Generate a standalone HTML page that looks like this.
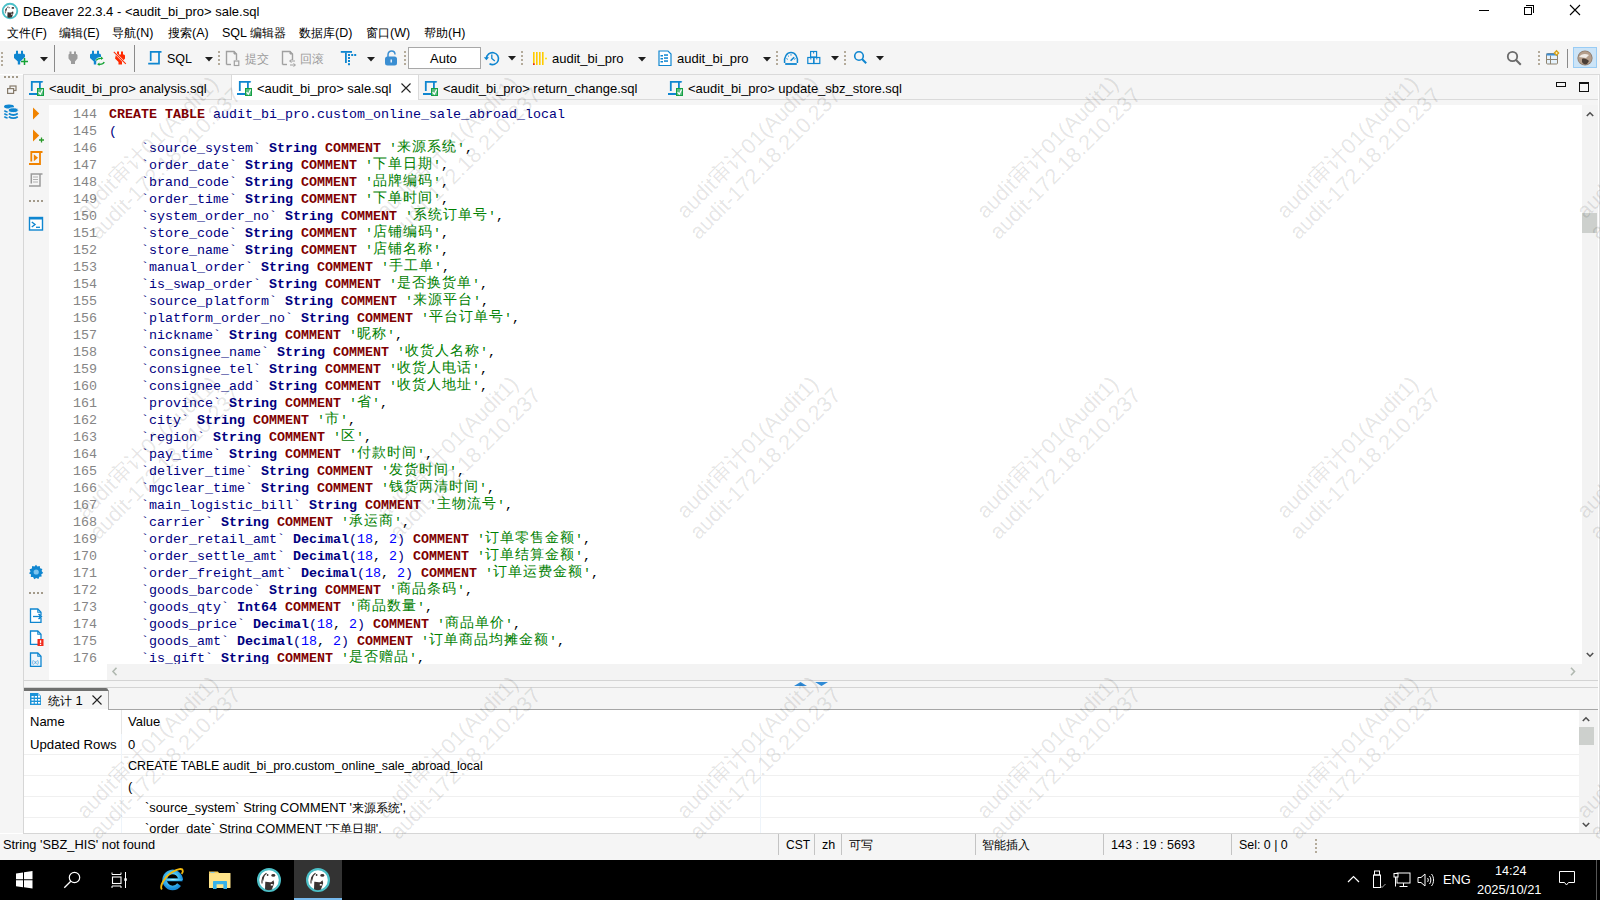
<!DOCTYPE html>
<html><head><meta charset="utf-8"><title>DBeaver</title>
<style>
*{margin:0;padding:0;box-sizing:border-box}
html,body{width:1600px;height:900px;overflow:hidden;background:#fff}
body{position:relative;font-family:"Liberation Sans",sans-serif;font-size:13px;color:#000}
.a{position:absolute}
svg.a{overflow:visible}
.ui{font-family:"Liberation Sans",sans-serif;white-space:nowrap}
.c{font-size:12px}
#code{position:absolute;left:109px;top:106px;font-family:"Liberation Mono",monospace;font-size:13.333px;line-height:17px;white-space:pre;color:#000}
#code div{height:17px}
#lnum{position:absolute;left:49px;top:106px;width:48px;font-family:"Liberation Mono",monospace;font-size:13.333px;line-height:17px;text-align:right;color:#858585;white-space:pre}
.k{color:#800000;font-weight:bold}
.t{color:#000080;font-weight:bold}
.i{color:#000080}
.n{color:#0000ff}
.s{color:#008000}
.cj{font-size:14px;letter-spacing:1px;position:relative;top:-1px}
#wm{position:absolute;left:0;top:0;width:1600px;height:900px;pointer-events:none;overflow:hidden}
.wm{position:absolute;color:rgba(0,0,0,0.11);font-size:21.5px;white-space:nowrap;transform:rotate(-45deg);transform-origin:0 100%;line-height:24px;font-family:"Liberation Sans",sans-serif}
</style></head><body>

<svg class="a" style="left:2px;top:2.75px" width="16" height="16" viewBox="0 0 24 24"><circle cx="12" cy="12" r="10.9" fill="#fff" stroke="#4cc0c8" stroke-width="2.8"/><path d="M5 15.5 C4.8 12 5.5 9 7.5 7 L9.5 5.2" stroke="#3a3230" stroke-width="1.1" fill="none"/><path d="M5.2 10 C5.5 8.8 6.5 8 7.5 7.8 L6.2 13Z" fill="#3a3230"/><circle cx="10.6" cy="7" r="0.9" fill="#3a3230"/><ellipse cx="16.3" cy="7.4" rx="2" ry="1.3" fill="#3a3230"/><path d="M8.3 13.8 C10 13.5 12 14.8 14.2 14.2 L16.5 12.3 L17.2 15 C16.5 17.5 15.5 19.5 15 21.5 C12.8 22.5 10.3 22.3 8 21.3 Z" fill="#3a3230"/><rect x="13.8" y="16" width="2" height="1.6" fill="#fff"/></svg>
<div class="a ui" style="left:23px;top:4.00px;font-size:13px;line-height:15px;color:#000;">DBeaver 22.3.4 - &lt;audit_bi_pro&gt; sale.sql</div>
<div class="a" style="left:1479px;top:10px;width:10px;height:1px;background:#000"></div>
<div class="a" style="left:1524px;top:7px;width:8px;height:8px;border:1px solid #000;background:#fff"></div>
<div class="a" style="left:1526px;top:5px;width:8px;height:2px;border-top:1px solid #000;border-right:1px solid #000"></div>
<div class="a" style="left:1533px;top:5px;width:1px;height:8px;background:#000"></div>
<svg class="a" style="left:1569px;top:4px" width="12" height="12" viewBox="0 0 12 12"><path d="M1 1L11 11M11 1L1 11" stroke="#000" stroke-width="1.1"/></svg>
<div class="a ui" style="left:7px;top:25.67px;font-size:12.5px;line-height:14px;color:#000;"><span class="c">文件</span>(F)</div>
<div class="a ui" style="left:59px;top:25.67px;font-size:12.5px;line-height:14px;color:#000;"><span class="c">编辑</span>(E)</div>
<div class="a ui" style="left:112px;top:25.67px;font-size:12.5px;line-height:14px;color:#000;"><span class="c">导航</span>(N)</div>
<div class="a ui" style="left:168px;top:25.67px;font-size:12.5px;line-height:14px;color:#000;"><span class="c">搜索</span>(A)</div>
<div class="a ui" style="left:299px;top:25.67px;font-size:12.5px;line-height:14px;color:#000;"><span class="c">数据库</span>(D)</div>
<div class="a ui" style="left:366px;top:25.67px;font-size:12.5px;line-height:14px;color:#000;"><span class="c">窗口</span>(W)</div>
<div class="a ui" style="left:424px;top:25.67px;font-size:12.5px;line-height:14px;color:#000;"><span class="c">帮助</span>(H)</div>
<div class="a ui" style="left:222px;top:25.67px;font-size:12.5px;line-height:14px;color:#000;">SQL <span class="c">编辑器</span></div>
<div class="a" style="left:0;top:41px;width:1600px;height:33px;background:#f5f5f5"></div>
<div class="a" style="left:23px;top:74px;width:1577px;height:1px;background:#dadada"></div>
<div class="a" style="left:1px;top:52px;width:2px;height:2px;background:#b4ab9b"></div><div class="a" style="left:1px;top:56px;width:2px;height:2px;background:#b4ab9b"></div><div class="a" style="left:1px;top:60px;width:2px;height:2px;background:#b4ab9b"></div><div class="a" style="left:1px;top:64px;width:2px;height:2px;background:#b4ab9b"></div>
<svg class="a" style="left:10px;top:48px" width="22" height="20" viewBox="0 0 22 20"><path d="M4 6.5 L5 5.8 H6 V2.8 H8 V5.8 H11 V2.8 H13 V5.8 H14 L15 6.8 V9 L10.2 13.6 V16.6 H7.8 V13.6 L4 10Z" fill="#0f86d0"/><path d="M11 13.5H18M14.5 10V17" stroke="#15a335" stroke-width="1.5"/></svg>
<svg class="a" style="left:40px;top:57px" width="8" height="5" viewBox="0 0 8 5"><path d="M0 0H8L4 4.5Z" fill="#1e1e1e"/></svg>
<div class="a" style="left:54px;top:45px;width:1px;height:27px;background:#8a8a8a"></div>
<svg class="a" style="left:64px;top:48px" width="18" height="20" viewBox="0 0 18 20"><path d="M4.5 6.8 L5 6 H5.5 V3.5 H7.5 V6 H10 V3.5 H12 V6 H12.5 L13.5 7 V10.5 L11 13.5 V16 H7 V13.5 L4.5 10.5Z" fill="#9c9c9c"/></svg>
<svg class="a" style="left:86px;top:48px" width="22" height="20" viewBox="0 0 22 20"><path d="M4 6.5 L5 5.8 H6 V2.8 H8 V5.8 H11 V2.8 H13 V5.8 H14 L15 6.8 V9 L10.2 13.6 V16.6 H7.8 V13.6 L4 10Z" fill="#0f86d0"/><path d="M10.5 13 C11.5 11 13 10.3 16 10.5" stroke="#fff" stroke-width="3" fill="none"/><path d="M10.2 12.5 C11 10.8 12.5 10.2 15.5 10.3" stroke="#15a335" stroke-width="1.3" fill="none"/><path d="M15 8.6 L17.3 10.3 L15 12Z" fill="#15a335"/><path d="M18.2 14 C17.5 15.8 16 16.5 13 16.3" stroke="#15a335" stroke-width="1.3" fill="none"/><path d="M13.5 14.6 L11.2 16.3 L13.5 18Z" fill="#15a335"/></svg>
<svg class="a" style="left:110px;top:48px" width="20" height="20" viewBox="0 0 20 20"><path d="M6 6.5 H7 V3.5 H9 V6.5 H11 V3.5 H13 V6.5 H14 L15 7.5 V10.5 L12 14 V16.5 H8.5 V14 L5 10.5Z" fill="#ff2a00"/><path d="M3.5 3.5 L16.5 16.5" stroke="#f5f5f5" stroke-width="2.2"/><path d="M3.8 3.8 L15.8 15.8" stroke="#ff2a00" stroke-width="1.1"/></svg>
<div class="a" style="left:134px;top:45px;width:1px;height:27px;background:#8a8a8a"></div>
<svg class="a" style="left:144px;top:48px" width="22" height="20" viewBox="0 0 22 20"><path d="M6.7 13 V3.8 H17.5 M15 3.8 V15.6 H4.2" stroke="#0f86d0" stroke-width="1.7" fill="none"/></svg>
<div class="a ui" style="left:167px;top:51.67px;font-size:12.5px;line-height:14px;color:#000;">SQL</div>
<svg class="a" style="left:205px;top:57px" width="8" height="5" viewBox="0 0 8 5"><path d="M0 0H8L4 4.5Z" fill="#1e1e1e"/></svg>
<div class="a" style="left:218px;top:51px;width:2px;height:2px;background:#b4ab9b"></div><div class="a" style="left:218px;top:55px;width:2px;height:2px;background:#b4ab9b"></div><div class="a" style="left:218px;top:59px;width:2px;height:2px;background:#b4ab9b"></div><div class="a" style="left:218px;top:63px;width:2px;height:2px;background:#b4ab9b"></div>
<svg class="a" style="left:225px;top:50px" width="16" height="17" viewBox="0 0 16 17"><path d="M1.5 14.5 V1.5 H9 L11.5 4 V10" stroke="#a0a0a0" stroke-width="1.4" fill="none"/><path d="M9 1.5 V4 H11.5" fill="#a0a0a0" stroke="#a0a0a0" stroke-width="1"/><path d="M1.5 14.5 H6" stroke="#a0a0a0" stroke-width="1.4"/><rect x="9.3" y="11" width="4.5" height="4.5" fill="none" stroke="#a0a0a0" stroke-width="1.2"/></svg>
<div class="a ui" style="left:245px;top:51.84px;font-size:12px;line-height:14px;color:#9c9c9c;"><span class="c" style="font-size:11.5px">提交</span></div>
<svg class="a" style="left:281px;top:50px" width="16" height="17" viewBox="0 0 16 17"><path d="M1.5 14.5 V1.5 H9 L11.5 4 V10" stroke="#a0a0a0" stroke-width="1.4" fill="none"/><path d="M9 1.5 V4 H11.5" fill="#a0a0a0" stroke="#a0a0a0" stroke-width="1"/><path d="M1.5 14.5 H6" stroke="#a0a0a0" stroke-width="1.4"/><path d="M9 11H14M9 15H14" stroke="#a0a0a0" stroke-width="1.1"/><path d="M10.5 9.5L8.5 11L10.5 12.5M12.5 13.5L14.5 15L12.5 16.5" stroke="#a0a0a0" stroke-width="1" fill="none"/></svg>
<div class="a ui" style="left:300px;top:51.84px;font-size:12px;line-height:14px;color:#9c9c9c;"><span class="c" style="font-size:11.5px">回滚</span></div>
<svg class="a" style="left:340px;top:50px" width="18" height="17" viewBox="0 0 18 17"><path d="M0.8 1.9 H12" stroke="#0f86d0" stroke-width="1.8"/><path d="M5.9 2.5 V13" stroke="#0f86d0" stroke-width="1.8"/><rect x="8" y="4" width="2" height="2" fill="#0f86d0"/><rect x="11.2" y="4" width="2" height="2" fill="#0f86d0"/><rect x="14.2" y="4" width="2" height="2" fill="#0f86d0"/><rect x="8" y="7" width="2" height="2" fill="#0f86d0"/><rect x="8" y="10" width="2" height="2" fill="#0f86d0"/><rect x="8" y="13.2" width="2" height="2" fill="#0f86d0"/></svg>
<svg class="a" style="left:367px;top:57px" width="8" height="5" viewBox="0 0 8 5"><path d="M0 0H8L4 4.5Z" fill="#1e1e1e"/></svg>
<svg class="a" style="left:384px;top:50px" width="15" height="17" viewBox="0 0 15 17"><path d="M4 7 V4.8 C4 2.2 5.8 1 7.6 1 C9.4 1 11 2.3 11 4.5" stroke="#3a8ed2" stroke-width="1.5" fill="none"/><rect x="1" y="6.5" width="12" height="9" rx="2.5" fill="#3a8ed2"/><rect x="6.5" y="9.5" width="1.5" height="3" fill="#e8f0f8"/></svg>
<div class="a" style="left:404px;top:51px;width:2px;height:2px;background:#b4ab9b"></div><div class="a" style="left:404px;top:55px;width:2px;height:2px;background:#b4ab9b"></div><div class="a" style="left:404px;top:59px;width:2px;height:2px;background:#b4ab9b"></div><div class="a" style="left:404px;top:63px;width:2px;height:2px;background:#b4ab9b"></div>
<div class="a" style="left:408px;top:47px;width:73px;height:22px;background:#fff;border:1px solid #a8a8a8"></div>
<div class="a ui" style="left:430px;top:51.00px;font-size:13px;line-height:15px;color:#000;">Auto</div>
<svg class="a" style="left:483px;top:50px" width="18" height="17" viewBox="0 0 18 17"><path d="M3.5 8.5 A6 6 0 1 1 6.5 13.8" stroke="#0f86d0" stroke-width="1.6" fill="none"/><path d="M0.8 7.3 H6 L3.4 10.3Z" fill="#0f86d0"/><path d="M8.8 4.5 V8.5 L11.8 11" stroke="#0f86d0" stroke-width="1.3" fill="none"/></svg>
<svg class="a" style="left:508px;top:56px" width="8" height="5" viewBox="0 0 8 5"><path d="M0 0H8L4 4.5Z" fill="#1e1e1e"/></svg>
<div class="a" style="left:521px;top:51px;width:2px;height:2px;background:#b4ab9b"></div><div class="a" style="left:521px;top:55px;width:2px;height:2px;background:#b4ab9b"></div><div class="a" style="left:521px;top:59px;width:2px;height:2px;background:#b4ab9b"></div><div class="a" style="left:521px;top:63px;width:2px;height:2px;background:#b4ab9b"></div>
<svg class="a" style="left:532px;top:50px" width="16" height="17" viewBox="0 0 16 17"><rect x="1" y="2" width="1.6" height="13" fill="#ffcc00"/><rect x="4" y="2" width="1.6" height="13" fill="#ffcc00"/><rect x="7" y="2" width="1.6" height="13" fill="#ffcc00"/><rect x="10" y="2" width="1.6" height="13" fill="#ffcc00"/><rect x="1" y="13.3" width="1.6" height="1.7" fill="#e82020"/><circle cx="14" cy="8.5" r="1" fill="#ffe000"/></svg>
<div class="a ui" style="left:552px;top:51.00px;font-size:13px;line-height:15px;color:#000;">audit_bi_pro</div>
<svg class="a" style="left:638px;top:57px" width="8" height="5" viewBox="0 0 8 5"><path d="M0 0H8L4 4.5Z" fill="#1e1e1e"/></svg>
<svg class="a" style="left:658px;top:50px" width="14" height="17" viewBox="0 0 14 17"><path d="M1 1 H10 L13 4 V15.5 H1Z" fill="#fff" stroke="#0f86d0" stroke-width="1.2"/><rect x="2.5" y="5" width="2.5" height="1.5" fill="#0f86d0"/><rect x="6" y="4.3" width="4" height="1.5" fill="#0f86d0"/><rect x="2.5" y="8" width="2.5" height="1.5" fill="#0f86d0"/><rect x="6" y="7.3" width="4" height="1.5" fill="#0f86d0"/><rect x="2.5" y="11" width="2.5" height="1.5" fill="#0f86d0"/><rect x="6" y="10.3" width="4" height="1.5" fill="#0f86d0"/></svg>
<div class="a ui" style="left:677px;top:51.00px;font-size:13px;line-height:15px;color:#000;">audit_bi_pro</div>
<svg class="a" style="left:763px;top:57px" width="8" height="5" viewBox="0 0 8 5"><path d="M0 0H8L4 4.5Z" fill="#1e1e1e"/></svg>
<div class="a" style="left:776px;top:51px;width:2px;height:2px;background:#b4ab9b"></div><div class="a" style="left:776px;top:55px;width:2px;height:2px;background:#b4ab9b"></div><div class="a" style="left:776px;top:59px;width:2px;height:2px;background:#b4ab9b"></div><div class="a" style="left:776px;top:63px;width:2px;height:2px;background:#b4ab9b"></div>
<svg class="a" style="left:782px;top:50px" width="18" height="16" viewBox="0 0 18 16"><path d="M2.6 13 C1.8 6.5 5 2.5 9 2.5 C13 2.5 16.2 6.5 15.4 13" stroke="#0f86d0" stroke-width="1.5" fill="none"/><path d="M3.2 14 H14.8" stroke="#0f86d0" stroke-width="1.8"/><path d="M8.6 10.8 L12.2 7.2" stroke="#0f86d0" stroke-width="1.6"/><path d="M4.4 8.6L5.8 9.3M9 4.2V5.6M13.6 8.6L12.2 9.3M5.9 5.6L6.9 6.5" stroke="#0f86d0" stroke-width="1"/></svg>
<svg class="a" style="left:807px;top:50px" width="16" height="16" viewBox="0 0 16 16"><rect x="3.6" y="1.5" width="6" height="5.5" fill="none" stroke="#0f86d0" stroke-width="1.2"/><rect x="0.8" y="7.5" width="6" height="6" fill="none" stroke="#0f86d0" stroke-width="1.2"/><rect x="6.8" y="7.5" width="6" height="6" fill="none" stroke="#0f86d0" stroke-width="1.2"/><path d="M6.6 1.5V3.5M3.8 7.5V9.5M9.8 7.5V9.5" stroke="#0f86d0" stroke-width="1"/></svg>
<svg class="a" style="left:831px;top:56px" width="8" height="5" viewBox="0 0 8 5"><path d="M0 0H8L4 4.5Z" fill="#1e1e1e"/></svg>
<div class="a" style="left:844px;top:51px;width:2px;height:2px;background:#b4ab9b"></div><div class="a" style="left:844px;top:55px;width:2px;height:2px;background:#b4ab9b"></div><div class="a" style="left:844px;top:59px;width:2px;height:2px;background:#b4ab9b"></div><div class="a" style="left:844px;top:63px;width:2px;height:2px;background:#b4ab9b"></div>
<svg class="a" style="left:853px;top:50px" width="16" height="16" viewBox="0 0 16 16"><circle cx="6" cy="6" r="4.3" fill="none" stroke="#0f86d0" stroke-width="1.6"/><path d="M9 9 L13.2 13.2" stroke="#0f86d0" stroke-width="2"/></svg>
<svg class="a" style="left:876px;top:56px" width="8" height="5" viewBox="0 0 8 5"><path d="M0 0H8L4 4.5Z" fill="#1e1e1e"/></svg>
<svg class="a" style="left:1506px;top:50px" width="17" height="17" viewBox="0 0 17 17"><circle cx="6.5" cy="6.5" r="4.7" fill="none" stroke="#6a6a6a" stroke-width="1.8"/><path d="M9.8 9.8 L14.8 14.8" stroke="#6a6a6a" stroke-width="2"/></svg>
<div class="a" style="left:1538px;top:51px;width:2px;height:2px;background:#b4ab9b"></div><div class="a" style="left:1538px;top:55px;width:2px;height:2px;background:#b4ab9b"></div><div class="a" style="left:1538px;top:59px;width:2px;height:2px;background:#b4ab9b"></div><div class="a" style="left:1538px;top:63px;width:2px;height:2px;background:#b4ab9b"></div>
<svg class="a" style="left:1545px;top:50px" width="17" height="16" viewBox="0 0 17 16"><rect x="1.5" y="3.5" width="11" height="10.5" rx="1" fill="#e6f2fb" stroke="#8f8470" stroke-width="1"/><rect x="1.5" y="3.5" width="11" height="2" fill="#3d8fd6"/><path d="M5.5 5.5V14M1.5 9.5H12.5" stroke="#8f8470" stroke-width="1"/><path d="M11.5 0.8 L13.6 3 L11.5 5.2 L9.4 3Z" fill="#fff3c0" stroke="#d6a21a" stroke-width="1.3"/></svg>
<div class="a" style="left:1567px;top:49px;width:1px;height:19px;background:#8a8a8a"></div>
<div class="a" style="left:1573px;top:47px;width:24px;height:21px;background:#cce4f7;border:1px solid #99ccf5"></div>
<svg class="a" style="left:1577px;top:50px" width="16" height="16" viewBox="0 0 16 16"><circle cx="8" cy="8" r="7.6" fill="#8c7a6c"/><circle cx="8" cy="8" r="6.8" fill="#b49e8c"/><path d="M2 7 C4 4 8 3 12 5 L9 8 Z" fill="#f0ebe6"/><path d="M5 9 C7 8 10 9 12 11 L10 14 C8 15 6 14 5 12Z" fill="#4a3d35"/></svg>
<div class="a" style="left:0;top:75px;width:23px;height:758px;background:#f5f5f5"></div>
<div class="a" style="left:4px;top:76px;width:2px;height:2px;background:#a39a8a"></div><div class="a" style="left:8px;top:76px;width:2px;height:2px;background:#a39a8a"></div><div class="a" style="left:12px;top:76px;width:2px;height:2px;background:#a39a8a"></div><div class="a" style="left:16px;top:76px;width:2px;height:2px;background:#a39a8a"></div>
<svg class="a" style="left:7px;top:85px" width="10" height="10" viewBox="0 0 10 10"><rect x="3" y="1" width="6" height="4.5" fill="none" stroke="#857a6a" stroke-width="1.2"/><rect x="0.6" y="3.6" width="6" height="4.8" fill="#f5f5f5" stroke="#857a6a" stroke-width="1.2"/></svg>
<svg class="a" style="left:0px;top:100px" width="22" height="22" viewBox="0 0 22 22"><ellipse cx="9" cy="6.5" rx="5" ry="2" fill="#0f86d0"/><path d="M4.3 10.6 Q5.5 11.7 7.6 11.9 M4.3 13.6 Q5.5 14.7 7.6 14.9 M4.3 16.6 Q5.5 17.7 7.6 18" stroke="#0f86d0" stroke-width="1.5" fill="none"/><ellipse cx="13.3" cy="10.2" rx="4.9" ry="2.4" fill="#0f86d0" stroke="#f5f5f5" stroke-width="0.9"/><path d="M8.8 13.6 Q13.3 16.4 17.8 13.6 M8.8 16.7 Q13.3 19.5 17.8 16.7" stroke="#0f86d0" stroke-width="1.8" fill="none"/></svg>
<div class="a" style="left:23px;top:75px;width:1px;height:613px;background:#d6d6d6"></div>
<div class="a" style="left:1599px;top:75px;width:1px;height:613px;background:#dcdcdc"></div>
<div class="a" style="left:24px;top:75px;width:1574px;height:24px;background:#f5f5f5"></div>
<div class="a" style="left:24px;top:99px;width:1574px;height:1px;background:#dadada"></div>
<div class="a" style="left:231px;top:75px;width:188px;height:25px;background:#fff;border-left:1px solid #dadada;border-right:1px solid #dadada"></div>
<div class="a" style="left:24px;top:100px;width:1574px;height:5px;background:#f5f5f5"></div>
<svg class="a" style="left:26px;top:78px" width="22" height="20" viewBox="0 0 22 20"><path d="M5.8 13 V3.8 H16.2 M13.9 3.8 V11 M3 16 H11.5" stroke="#0f86d0" stroke-width="1.8" fill="none"/><path d="M16 2.9 L17.3 3.8 L16 4.7Z" fill="#0f86d0"/><rect x="11" y="10" width="7" height="8" fill="#14a044"/><rect x="12" y="11" width="5" height="6" fill="#5cbd80"/><path d="M12.6 14.2 L14.3 16.2 L16.6 11.6" stroke="#fff" stroke-width="1.2" fill="none"/></svg>
<div class="a ui" style="left:49px;top:81.00px;font-size:13px;line-height:15px;color:#000;">&lt;audit_bi_pro&gt; analysis.sql</div>
<svg class="a" style="left:234px;top:78px" width="22" height="20" viewBox="0 0 22 20"><path d="M5.8 13 V3.8 H16.2 M13.9 3.8 V11 M3 16 H11.5" stroke="#0f86d0" stroke-width="1.8" fill="none"/><path d="M16 2.9 L17.3 3.8 L16 4.7Z" fill="#0f86d0"/><rect x="11" y="10" width="7" height="8" fill="#14a044"/><rect x="12" y="11" width="5" height="6" fill="#5cbd80"/><path d="M12.6 14.2 L14.3 16.2 L16.6 11.6" stroke="#fff" stroke-width="1.2" fill="none"/></svg>
<div class="a ui" style="left:257px;top:81.00px;font-size:13px;line-height:15px;color:#000;">&lt;audit_bi_pro&gt; sale.sql</div>
<svg class="a" style="left:420px;top:78px" width="22" height="20" viewBox="0 0 22 20"><path d="M5.8 13 V3.8 H16.2 M13.9 3.8 V11 M3 16 H11.5" stroke="#0f86d0" stroke-width="1.8" fill="none"/><path d="M16 2.9 L17.3 3.8 L16 4.7Z" fill="#0f86d0"/><rect x="11" y="10" width="7" height="8" fill="#14a044"/><rect x="12" y="11" width="5" height="6" fill="#5cbd80"/><path d="M12.6 14.2 L14.3 16.2 L16.6 11.6" stroke="#fff" stroke-width="1.2" fill="none"/></svg>
<div class="a ui" style="left:443px;top:81.00px;font-size:13px;line-height:15px;color:#000;">&lt;audit_bi_pro&gt; return_change.sql</div>
<svg class="a" style="left:665px;top:78px" width="22" height="20" viewBox="0 0 22 20"><path d="M5.8 13 V3.8 H16.2 M13.9 3.8 V11 M3 16 H11.5" stroke="#0f86d0" stroke-width="1.8" fill="none"/><path d="M16 2.9 L17.3 3.8 L16 4.7Z" fill="#0f86d0"/><rect x="11" y="10" width="7" height="8" fill="#14a044"/><rect x="12" y="11" width="5" height="6" fill="#5cbd80"/><path d="M12.6 14.2 L14.3 16.2 L16.6 11.6" stroke="#fff" stroke-width="1.2" fill="none"/></svg>
<div class="a ui" style="left:688px;top:81.00px;font-size:13px;line-height:15px;color:#000;">&lt;audit_bi_pro&gt; update_sbz_store.sql</div>
<svg class="a" style="left:401px;top:83px" width="10" height="10" viewBox="0 0 10 10"><path d="M0.5 0.5L9.5 9.5M9.5 0.5L0.5 9.5" stroke="#222" stroke-width="1.1"/></svg>
<div class="a" style="left:1556px;top:82px;width:10px;height:5px;border:2px solid #111;border-width:1.5px"></div>
<div class="a" style="left:1579px;top:82px;width:10px;height:10px;border:1px solid #111;border-top:2px solid #111"></div>
<div class="a" style="left:24px;top:105px;width:25px;height:575px;background:#f5f5f5"></div>
<div class="a" style="left:1582px;top:105px;width:16px;height:559px;background:#f3f3f3"></div>
<svg class="a" style="left:1586px;top:111px" width="8" height="6" viewBox="0 0 8 6"><path d="M0.8 5 L4 1.8 L7.2 5" stroke="#505050" stroke-width="1.6" fill="none"/></svg>
<div class="a" style="left:1582px;top:213px;width:15px;height:20px;background:#cdd0cd"></div>
<svg class="a" style="left:1586px;top:652px" width="8" height="6" viewBox="0 0 8 6"><path d="M0.8 1 L4 4.2 L7.2 1" stroke="#505050" stroke-width="1.6" fill="none"/></svg>
<div class="a" style="left:107px;top:664px;width:1491px;height:16px;background:#f3f3f3"></div>
<svg class="a" style="left:111px;top:667px" width="8" height="9" viewBox="0 0 8 9"><path d="M5.5 0.8 L2 4.5 L5.5 8.2" stroke="#b0b8b0" stroke-width="1.6" fill="none"/></svg>
<svg class="a" style="left:1569px;top:667px" width="8" height="9" viewBox="0 0 8 9"><path d="M2 0.8 L5.5 4.5 L2 8.2" stroke="#b0b8b0" stroke-width="1.6" fill="none"/></svg>
<svg class="a" style="left:32px;top:107px" width="8" height="13" viewBox="0 0 8 13"><path d="M1 0.5 L7.2 6.5 L1 12.5Z" fill="#f08300"/></svg>
<svg class="a" style="left:32px;top:129px" width="12" height="14" viewBox="0 0 12 14"><path d="M1 0.5 L7.2 6.5 L1 12.5Z" fill="#f08300"/><path d="M7 11H12M9.5 8.5V13.5" stroke="#2a9a2a" stroke-width="1.3"/></svg>
<svg class="a" style="left:28px;top:150px" width="16" height="16" viewBox="0 0 16 16"><path d="M3.3 11.5 V2 H14.5 M12 2 V14 H1" stroke="#f08300" stroke-width="1.8" fill="none"/><path d="M5.8 4.3 L10 7.8 L5.8 11.3Z" fill="#f08300"/></svg>
<svg class="a" style="left:28px;top:172px" width="16" height="16" viewBox="0 0 16 16"><path d="M3.3 11.5 V2 H14.5 M12 2 V14 H1" stroke="#9a9a9a" stroke-width="1.5" fill="none"/><path d="M5 5H10M5 7.5H10M5 10H10" stroke="#b0b0b0" stroke-width="1"/></svg>
<div class="a" style="left:29px;top:200px;width:2px;height:2px;background:#a39a8a"></div><div class="a" style="left:33px;top:200px;width:2px;height:2px;background:#a39a8a"></div><div class="a" style="left:37px;top:200px;width:2px;height:2px;background:#a39a8a"></div><div class="a" style="left:41px;top:200px;width:2px;height:2px;background:#a39a8a"></div>
<svg class="a" style="left:28px;top:216px" width="16" height="16" viewBox="0 0 16 16"><rect x="1.5" y="1.5" width="13" height="12.5" fill="#fff" stroke="#0f86d0" stroke-width="1.4"/><rect x="1" y="1" width="14" height="2.5" fill="#0f86d0"/><path d="M3.8 6 L7 8.5 L3.8 11" stroke="#0f86d0" stroke-width="1.4" fill="none"/><path d="M8 11.3H12" stroke="#0f86d0" stroke-width="1.3"/></svg>
<svg class="a" style="left:28px;top:564px" width="16" height="16" viewBox="0 0 16 16"><path d="M8 0.8 L9.4 2.6 L11.7 1.9 L12.1 4.2 L14.4 4.9 L13.6 7.1 L15.2 8.9 L13.3 10.3 L13.7 12.6 L11.4 12.8 L10.4 15 L8.3 14 L6.2 15.2 L5.1 13 L2.8 12.9 L3 10.6 L1 9.2 L2.5 7.4 L1.6 5.2 L3.9 4.4 L4.2 2.1 L6.5 2.6Z" fill="#0f86d0"/><circle cx="8.2" cy="8" r="2.6" fill="#7cc4ef"/></svg>
<div class="a" style="left:29px;top:592px;width:2px;height:2px;background:#a39a8a"></div><div class="a" style="left:33px;top:592px;width:2px;height:2px;background:#a39a8a"></div><div class="a" style="left:37px;top:592px;width:2px;height:2px;background:#a39a8a"></div><div class="a" style="left:41px;top:592px;width:2px;height:2px;background:#a39a8a"></div>
<svg class="a" style="left:29px;top:608px" width="15" height="16" viewBox="0 0 15 16"><path d="M1.5 1 H8.8 L12 4.2 V14.3 H1.5Z" fill="#fff" stroke="#0f86d0" stroke-width="1.3"/><path d="M8.8 1 V4.2 H12" fill="none" stroke="#0f86d0" stroke-width="1.1"/><path d="M4 8.5 H12.5" stroke="#0f86d0" stroke-width="1.3"/><path d="M10 6.2 L12.6 8.5 L10 10.8" stroke="#0f86d0" stroke-width="1.3" fill="none"/><rect x="11.6" y="7.3" width="2.5" height="2.4" fill="#f5f5f5"/><path d="M9.5 6 L12.5 8.5 L9.5 11" stroke="#0f86d0" stroke-width="1.3" fill="none"/></svg>
<svg class="a" style="left:29px;top:630px" width="15" height="16" viewBox="0 0 15 16"><path d="M1.5 1 H8.8 L12 4.2 V14.3 H1.5Z" fill="#fff" stroke="#0f86d0" stroke-width="1.3"/><path d="M8.8 1 V4.2 H12" fill="none" stroke="#0f86d0" stroke-width="1.1"/><rect x="8.5" y="9" width="6" height="7" fill="#f02a1a"/><rect x="10.9" y="10.3" width="1.3" height="2.6" fill="#fff"/><rect x="10.9" y="13.7" width="1.3" height="1.3" fill="#fff"/></svg>
<svg class="a" style="left:29px;top:652px" width="15" height="16" viewBox="0 0 15 16"><path d="M1.5 1 H8.8 L12 4.2 V14.3 H1.5Z" fill="#eef6fc" stroke="#0f86d0" stroke-width="1.3"/><path d="M8.8 1 V4.2 H12" fill="none" stroke="#0f86d0" stroke-width="1.1"/><text x="2.8" y="11.5" font-size="6" font-family="Liberation Sans" fill="#0f86d0">(x)</text></svg>
<div id="lnum">144
145
146
147
148
149
150
151
152
153
154
155
156
157
158
159
160
161
162
163
164
165
166
167
168
169
170
171
172
173
174
175
176</div>
<div id="code"><div><b class="k">CREATE</b> <b class="k">TABLE</b> <span class="i">audit_bi_pro.custom_online_sale_abroad_local</span></div><div><span class="i">(</span></div><div>    <span class="i">`source_system`</span> <b class="t">String</b> <b class="k">COMMENT</b> <span class="s">'<span class="cj">来源系统</span>'</span>,</div><div>    <span class="i">`order_date`</span> <b class="t">String</b> <b class="k">COMMENT</b> <span class="s">'<span class="cj">下单日期</span>'</span>,</div><div>    <span class="i">`brand_code`</span> <b class="t">String</b> <b class="k">COMMENT</b> <span class="s">'<span class="cj">品牌编码</span>'</span>,</div><div>    <span class="i">`order_time`</span> <b class="t">String</b> <b class="k">COMMENT</b> <span class="s">'<span class="cj">下单时间</span>'</span>,</div><div>    <span class="i">`system_order_no`</span> <b class="t">String</b> <b class="k">COMMENT</b> <span class="s">'<span class="cj">系统订单号</span>'</span>,</div><div>    <span class="i">`store_code`</span> <b class="t">String</b> <b class="k">COMMENT</b> <span class="s">'<span class="cj">店铺编码</span>'</span>,</div><div>    <span class="i">`store_name`</span> <b class="t">String</b> <b class="k">COMMENT</b> <span class="s">'<span class="cj">店铺名称</span>'</span>,</div><div>    <span class="i">`manual_order`</span> <b class="t">String</b> <b class="k">COMMENT</b> <span class="s">'<span class="cj">手工单</span>'</span>,</div><div>    <span class="i">`is_swap_order`</span> <b class="t">String</b> <b class="k">COMMENT</b> <span class="s">'<span class="cj">是否换货单</span>'</span>,</div><div>    <span class="i">`source_platform`</span> <b class="t">String</b> <b class="k">COMMENT</b> <span class="s">'<span class="cj">来源平台</span>'</span>,</div><div>    <span class="i">`platform_order_no`</span> <b class="t">String</b> <b class="k">COMMENT</b> <span class="s">'<span class="cj">平台订单号</span>'</span>,</div><div>    <span class="i">`nickname`</span> <b class="t">String</b> <b class="k">COMMENT</b> <span class="s">'<span class="cj">昵称</span>'</span>,</div><div>    <span class="i">`consignee_name`</span> <b class="t">String</b> <b class="k">COMMENT</b> <span class="s">'<span class="cj">收货人名称</span>'</span>,</div><div>    <span class="i">`consignee_tel`</span> <b class="t">String</b> <b class="k">COMMENT</b> <span class="s">'<span class="cj">收货人电话</span>'</span>,</div><div>    <span class="i">`consignee_add`</span> <b class="t">String</b> <b class="k">COMMENT</b> <span class="s">'<span class="cj">收货人地址</span>'</span>,</div><div>    <span class="i">`province`</span> <b class="t">String</b> <b class="k">COMMENT</b> <span class="s">'<span class="cj">省</span>'</span>,</div><div>    <span class="i">`city`</span> <b class="t">String</b> <b class="k">COMMENT</b> <span class="s">'<span class="cj">市</span>'</span>,</div><div>    <span class="i">`region`</span> <b class="t">String</b> <b class="k">COMMENT</b> <span class="s">'<span class="cj">区</span>'</span>,</div><div>    <span class="i">`pay_time`</span> <b class="t">String</b> <b class="k">COMMENT</b> <span class="s">'<span class="cj">付款时间</span>'</span>,</div><div>    <span class="i">`deliver_time`</span> <b class="t">String</b> <b class="k">COMMENT</b> <span class="s">'<span class="cj">发货时间</span>'</span>,</div><div>    <span class="i">`mgclear_time`</span> <b class="t">String</b> <b class="k">COMMENT</b> <span class="s">'<span class="cj">钱货两清时间</span>'</span>,</div><div>    <span class="i">`main_logistic_bill`</span> <b class="t">String</b> <b class="k">COMMENT</b> <span class="s">'<span class="cj">主物流号</span>'</span>,</div><div>    <span class="i">`carrier`</span> <b class="t">String</b> <b class="k">COMMENT</b> <span class="s">'<span class="cj">承运商</span>'</span>,</div><div>    <span class="i">`order_retail_amt`</span> <b class="t">Decimal</b><span class="i">(</span><span class="n">18</span>, <span class="n">2</span><span class="i">)</span> <b class="k">COMMENT</b> <span class="s">'<span class="cj">订单零售金额</span>'</span>,</div><div>    <span class="i">`order_settle_amt`</span> <b class="t">Decimal</b><span class="i">(</span><span class="n">18</span>, <span class="n">2</span><span class="i">)</span> <b class="k">COMMENT</b> <span class="s">'<span class="cj">订单结算金额</span>'</span>,</div><div>    <span class="i">`order_freight_amt`</span> <b class="t">Decimal</b><span class="i">(</span><span class="n">18</span>, <span class="n">2</span><span class="i">)</span> <b class="k">COMMENT</b> <span class="s">'<span class="cj">订单运费金额</span>'</span>,</div><div>    <span class="i">`goods_barcode`</span> <b class="t">String</b> <b class="k">COMMENT</b> <span class="s">'<span class="cj">商品条码</span>'</span>,</div><div>    <span class="i">`goods_qty`</span> <b class="t">Int64</b> <b class="k">COMMENT</b> <span class="s">'<span class="cj">商品数量</span>'</span>,</div><div>    <span class="i">`goods_price`</span> <b class="t">Decimal</b><span class="i">(</span><span class="n">18</span>, <span class="n">2</span><span class="i">)</span> <b class="k">COMMENT</b> <span class="s">'<span class="cj">商品单价</span>'</span>,</div><div>    <span class="i">`goods_amt`</span> <b class="t">Decimal</b><span class="i">(</span><span class="n">18</span>, <span class="n">2</span><span class="i">)</span> <b class="k">COMMENT</b> <span class="s">'<span class="cj">订单商品均摊金额</span>'</span>,</div><div>    <span class="i">`is_gift`</span> <b class="t">String</b> <b class="k">COMMENT</b> <span class="s">'<span class="cj">是否赠品</span>'</span>,</div></div>
<div class="a" style="left:49px;top:664px;width:58px;height:16px;background:#fff"></div>
<div class="a" style="left:107px;top:664px;width:1491px;height:16px;background:#f3f3f3"></div>
<svg class="a" style="left:111px;top:667px" width="8" height="9" viewBox="0 0 8 9"><path d="M5.5 0.8 L2 4.5 L5.5 8.2" stroke="#b0b8b0" stroke-width="1.6" fill="none"/></svg>
<svg class="a" style="left:1569px;top:667px" width="8" height="9" viewBox="0 0 8 9"><path d="M2 0.8 L5.5 4.5 L2 8.2" stroke="#b0b8b0" stroke-width="1.6" fill="none"/></svg>
<div class="a" style="left:24px;top:680px;width:1574px;height:1px;background:#d4d4d4"></div>
<div class="a" style="left:24px;top:681px;width:1574px;height:6px;background:#f5f5f5"></div>
<div class="a" style="left:24px;top:687px;width:1574px;height:1px;background:#d4d4d4"></div>
<svg class="a" style="left:793px;top:680px" width="36" height="7" viewBox="0 0 36 7"><path d="M1 6 L7.5 2 L14 6Z" fill="#2f8bd6"/><path d="M22 2 H35 L28.5 6Z" fill="#2f8bd6"/></svg>
<div class="a" style="left:24px;top:688px;width:1574px;height:21px;background:#f5f5f5"></div>
<div class="a" style="left:108px;top:709px;width:1490px;height:1px;background:#a6a6a6"></div>
<div class="a" style="left:24px;top:688px;width:84px;height:3px;background:#6f706f;border-top-right-radius:2px"></div>
<div class="a" style="left:108px;top:690px;width:1px;height:20px;background:#a6a6a6"></div>
<svg class="a" style="left:29px;top:692px" width="13" height="14" viewBox="0 0 13 14"><path d="M1 1 H9 L12 4 V13 H1Z" fill="#1c93d8"/><rect x="2.5" y="4" width="2.2" height="1.6" fill="#fff"/><rect x="2.5" y="7" width="2.2" height="1.6" fill="#fff"/><rect x="2.5" y="10" width="2.2" height="1.6" fill="#fff"/><rect x="5.8" y="4" width="2.2" height="1.6" fill="#fff"/><rect x="5.8" y="7" width="2.2" height="1.6" fill="#fff"/><rect x="5.8" y="10" width="2.2" height="1.6" fill="#fff"/><rect x="9" y="4" width="2.2" height="1.6" fill="#fff"/><rect x="9" y="7" width="2.2" height="1.6" fill="#fff"/><rect x="9" y="10" width="2.2" height="1.6" fill="#fff"/><path d="M9 1V4H12" fill="#8cc8ec"/></svg>
<div class="a ui" style="left:48px;top:693.00px;font-size:13px;line-height:15px;color:#000;"><span class="c">统计</span> 1</div>
<svg class="a" style="left:92px;top:695px" width="10" height="10" viewBox="0 0 10 10"><path d="M0.5 0.5L9.5 9.5M9.5 0.5L0.5 9.5" stroke="#222" stroke-width="1.1"/></svg>
<div class="a" style="left:23px;top:688px;width:1px;height:146px;background:#d6d6d6"></div>
<div class="a" style="left:24px;top:710px;width:1555px;height:123px;background:#fff"></div>
<div class="a" style="left:1579px;top:710px;width:19px;height:123px;background:#f3f3f3"></div>
<svg class="a" style="left:1582px;top:716px" width="8" height="6" viewBox="0 0 8 6"><path d="M0.8 5 L4 1.8 L7.2 5" stroke="#505050" stroke-width="1.6" fill="none"/></svg>
<div class="a" style="left:1579px;top:727px;width:15px;height:18px;background:#cdd0cd"></div>
<svg class="a" style="left:1582px;top:822px" width="8" height="6" viewBox="0 0 8 6"><path d="M0.8 1 L4 4.2 L7.2 1" stroke="#505050" stroke-width="1.6" fill="none"/></svg>
<div class="a" style="left:1599px;top:688px;width:1px;height:146px;background:#dcdcdc"></div>
<div class="a" style="left:24px;top:833px;width:1575px;height:1px;background:#d6d6d6"></div>
<div class="a" style="left:24px;top:754px;width:1555px;height:1px;background:#f0f0f0"></div>
<div class="a" style="left:24px;top:775px;width:1555px;height:1px;background:#f0f0f0"></div>
<div class="a" style="left:24px;top:796px;width:1555px;height:1px;background:#f0f0f0"></div>
<div class="a" style="left:24px;top:817px;width:1555px;height:1px;background:#f0f0f0"></div>
<div class="a" style="left:121px;top:710px;width:1px;height:24px;background:#e6e6e6"></div>
<div class="a" style="left:121px;top:734px;width:1px;height:99px;background:#eef4fa"></div>
<div class="a" style="left:760px;top:733px;width:1px;height:100px;background:#eef4fa"></div>
<div class="a ui" style="left:30px;top:714.00px;font-size:13px;line-height:15px;color:#000;">Name</div>
<div class="a ui" style="left:128px;top:714.00px;font-size:13px;line-height:15px;color:#000;">Value</div>
<div class="a ui" style="left:30px;top:736.93px;font-size:13.2px;line-height:15px;color:#000;">Updated Rows</div>
<div class="a ui" style="left:128px;top:737.00px;font-size:13px;line-height:15px;color:#000;">0</div>
<div class="a ui" style="left:128px;top:758.69px;font-size:12.45px;line-height:14px;color:#000;">CREATE TABLE audit_bi_pro.custom_online_sale_abroad_local</div>
<div class="a ui" style="left:128px;top:779.00px;font-size:13px;line-height:15px;color:#000;">(</div>
<div class="a ui" style="left:145px;top:800.06px;font-size:12.8px;line-height:15px;color:#000;">`source_system` String COMMENT '<span class="c">来源系统</span>',</div>
<div class="a" style="left:24px;top:818px;width:1555px;height:15px;overflow:hidden">
<div class="a ui" style="left:121px;top:3.3px;font-size:12.8px;line-height:15px">`order_date` String COMMENT '<span class="c">下单日期</span>',</div></div>
<div class="a" style="left:0;top:834px;width:1600px;height:26px;background:#f5f5f5"></div>
<div class="a ui" style="left:3px;top:837.06px;font-size:12.8px;line-height:15px;color:#000;">String 'SBZ_HIS' not found</div>
<div class="a" style="left:778px;top:834px;width:1px;height:21px;background:#c4c4c4"></div>
<div class="a" style="left:814px;top:834px;width:1px;height:21px;background:#c4c4c4"></div>
<div class="a" style="left:841px;top:834px;width:1px;height:21px;background:#c4c4c4"></div>
<div class="a" style="left:975px;top:834px;width:1px;height:21px;background:#c4c4c4"></div>
<div class="a" style="left:1103px;top:834px;width:1px;height:21px;background:#c4c4c4"></div>
<div class="a" style="left:1231px;top:834px;width:1px;height:21px;background:#c4c4c4"></div>
<div class="a ui" style="left:786px;top:837.84px;font-size:12px;line-height:14px;color:#000;">CST</div>
<div class="a ui" style="left:822px;top:837.67px;font-size:12.5px;line-height:14px;color:#000;">zh</div>
<div class="a ui" style="left:849px;top:837.67px;font-size:12.5px;line-height:14px;color:#000;"><span class="c">可写</span></div>
<div class="a ui" style="left:982px;top:837.67px;font-size:12.5px;line-height:14px;color:#000;"><span class="c">智能插入</span></div>
<div class="a ui" style="left:1111px;top:837.63px;font-size:12.6px;line-height:14px;color:#000;">143 : 19 : 5693</div>
<div class="a ui" style="left:1239px;top:837.70px;font-size:12.4px;line-height:14px;color:#000;">Sel: 0 | 0</div>
<div class="a" style="left:1315px;top:839px;width:2px;height:2px;background:#b4ab9b"></div><div class="a" style="left:1315px;top:843px;width:2px;height:2px;background:#b4ab9b"></div><div class="a" style="left:1315px;top:847px;width:2px;height:2px;background:#b4ab9b"></div><div class="a" style="left:1315px;top:851px;width:2px;height:2px;background:#b4ab9b"></div>
<div class="a" style="left:0;top:860px;width:1600px;height:40px;background:#000"></div>
<svg class="a" style="left:16px;top:871px" width="17" height="18" viewBox="0 0 17 18"><path d="M0 2.4 L7 1.4 V8.3 H0Z M8 1.3 L16.5 0 V8.3 H8Z M0 9.3 H7 V16.2 L0 15.2Z M8 9.3 H16.5 V17.5 L8 16.3Z" fill="#fff"/></svg>
<svg class="a" style="left:63px;top:871px" width="18" height="18" viewBox="0 0 18 18"><circle cx="11.5" cy="6.5" r="5.2" fill="none" stroke="#fff" stroke-width="1.2"/><path d="M7.8 10.2 L1.3 16.7" stroke="#fff" stroke-width="1.3"/></svg>
<svg class="a" style="left:111px;top:871px" width="18" height="18" viewBox="0 0 18 18"><path d="M1 1.5V3.5H10V1.5M1 17V15H10V17" stroke="#fff" stroke-width="1" fill="none"/><rect x="1.5" y="6" width="8.5" height="6.5" fill="none" stroke="#fff" stroke-width="1.1"/><path d="M14.5 1V17" stroke="#fff" stroke-width="1"/><rect x="13.3" y="7.3" width="2.5" height="2.5" fill="#fff"/></svg>
<svg class="a" style="left:159px;top:866px" width="26" height="26" viewBox="0 0 26 26"><defs><radialGradient id="ie" cx="45%" cy="40%" r="65%"><stop offset="0" stop-color="#b8f0ff"/><stop offset="0.55" stop-color="#4cc6f4"/><stop offset="1" stop-color="#1a8fdc"/></radialGradient></defs><path d="M21.6 14 A8 8 0 1 0 20.1 18.6" stroke="url(#ie)" stroke-width="4.6" fill="none"/><rect x="6" y="12.3" width="17.5" height="3" fill="url(#ie)"/><path d="M2.8 23.5 C0.5 20.5 5 11 13.5 6 C18.5 3 23.2 2 23.8 4.5 C24.1 5.6 23.4 7 22.6 7.8" stroke="#f2b90f" stroke-width="1.9" fill="none"/></svg>
<svg class="a" style="left:209px;top:871px" width="22" height="19" viewBox="0 0 22 19"><rect x="0" y="2" width="21.5" height="15" rx="0.5" fill="#ffe48a"/><path d="M0 0.6 H8.8 L10.3 2.2 H0Z" fill="#f6cf5c"/><rect x="1.5" y="1" width="4" height="1" fill="#8ccbe8"/><path d="M4 18 V10.8 Q4 10 4.8 10 H17.2 Q18 10 18 10.8 V18 H14.4 V13.3 H7.6 V18Z" fill="#37b2ea"/></svg>
<svg class="a" style="left:257px;top:868px" width="24" height="24" viewBox="0 0 24 24"><circle cx="12" cy="12" r="10.9" fill="#fff" stroke="#4cc0c8" stroke-width="2.2"/><path d="M5 15.5 C4.8 12 5.5 9 7.5 7 L9.5 5.2" stroke="#3a3230" stroke-width="1.1" fill="none"/><path d="M5.2 10 C5.5 8.8 6.5 8 7.5 7.8 L6.2 13Z" fill="#3a3230"/><circle cx="10.6" cy="7" r="0.9" fill="#3a3230"/><ellipse cx="16.3" cy="7.4" rx="2" ry="1.3" fill="#3a3230"/><path d="M8.3 13.8 C10 13.5 12 14.8 14.2 14.2 L16.5 12.3 L17.2 15 C16.5 17.5 15.5 19.5 15 21.5 C12.8 22.5 10.3 22.3 8 21.3 Z" fill="#3a3230"/><rect x="13.8" y="16" width="2" height="1.6" fill="#fff"/></svg>
<div class="a" style="left:294px;top:860px;width:48px;height:40px;background:#333"></div>
<div class="a" style="left:294px;top:898px;width:48px;height:2px;background:#76b9ed"></div>
<svg class="a" style="left:306px;top:868px" width="24" height="24" viewBox="0 0 24 24"><circle cx="12" cy="12" r="10.9" fill="#fff" stroke="#4cc0c8" stroke-width="2.2"/><path d="M5 15.5 C4.8 12 5.5 9 7.5 7 L9.5 5.2" stroke="#3a3230" stroke-width="1.1" fill="none"/><path d="M5.2 10 C5.5 8.8 6.5 8 7.5 7.8 L6.2 13Z" fill="#3a3230"/><circle cx="10.6" cy="7" r="0.9" fill="#3a3230"/><ellipse cx="16.3" cy="7.4" rx="2" ry="1.3" fill="#3a3230"/><path d="M8.3 13.8 C10 13.5 12 14.8 14.2 14.2 L16.5 12.3 L17.2 15 C16.5 17.5 15.5 19.5 15 21.5 C12.8 22.5 10.3 22.3 8 21.3 Z" fill="#3a3230"/><rect x="13.8" y="16" width="2" height="1.6" fill="#fff"/></svg>
<svg class="a" style="left:1347px;top:875px" width="13" height="8" viewBox="0 0 13 8"><path d="M1 7 L6.5 1.5 L12 7" stroke="#fff" stroke-width="1.2" fill="none"/></svg>
<svg class="a" style="left:1372px;top:870px" width="14" height="20" viewBox="0 0 14 20"><rect x="2.5" y="1" width="5" height="4" fill="none" stroke="#fff" stroke-width="1"/><rect x="1.5" y="5" width="7" height="12.5" fill="none" stroke="#fff" stroke-width="1"/><path d="M8.5 16 L10 17.5 L13.5 14" stroke="#bbb" stroke-width="0.9" fill="none"/></svg>
<svg class="a" style="left:1393px;top:872px" width="18" height="16" viewBox="0 0 18 16"><rect x="4" y="1" width="13" height="10" fill="none" stroke="#fff" stroke-width="1"/><rect x="1" y="1.5" width="4" height="3.5" fill="#000" stroke="#fff" stroke-width="1"/><path d="M2.5 5V14.5M10.5 11V14M6.5 14.5H14.5" stroke="#fff" stroke-width="1"/></svg>
<svg class="a" style="left:1417px;top:872px" width="18" height="16" viewBox="0 0 18 16"><path d="M1 5.5 H4 L8 2 V14 L4 10.5 H1Z" fill="none" stroke="#fff" stroke-width="1"/><path d="M10.5 6 C11.5 7 11.5 9 10.5 10 M12.5 4 C14.3 6 14.3 10 12.5 12 M14.5 2 C17.2 5 17.2 11 14.5 14" stroke="#fff" stroke-width="1" fill="none"/></svg>
<div class="a ui" style="left:1443px;top:872.06px;font-size:12.8px;line-height:15px;color:#fff;">ENG</div>
<div class="a ui" style="left:1495px;top:863.63px;font-size:12.6px;line-height:14px;color:#fff;">14:24</div>
<div class="a ui" style="left:1477px;top:882.03px;font-size:12.9px;line-height:15px;color:#fff;">2025/10/21</div>
<svg class="a" style="left:1559px;top:871px" width="17" height="17" viewBox="0 0 17 17"><path d="M0.5 0.5 H15.5 V11.5 H9.5 L7.5 14 L5.5 11.5 H0.5Z" fill="none" stroke="#fff" stroke-width="1"/></svg>
<div class="a" style="left:1596px;top:860px;width:1px;height:40px;background:#555"></div>
<div id="wm">
<div class="wm" style="left:-211.0px;top:798.5px">audit审计01(Audit1)</div>
<div class="wm" style="left:-198.0px;top:819.5px">audit-172.18.210.237</div>
<div class="wm" style="left:-211.0px;top:498.5px">audit审计01(Audit1)</div>
<div class="wm" style="left:-198.0px;top:519.5px">audit-172.18.210.237</div>
<div class="wm" style="left:-211.0px;top:198.5px">audit审计01(Audit1)</div>
<div class="wm" style="left:-198.0px;top:219.5px">audit-172.18.210.237</div>
<div class="wm" style="left:-211.0px;top:-101.5px">audit审计01(Audit1)</div>
<div class="wm" style="left:-198.0px;top:-80.5px">audit-172.18.210.237</div>
<div class="wm" style="left:89.0px;top:798.5px">audit审计01(Audit1)</div>
<div class="wm" style="left:102.0px;top:819.5px">audit-172.18.210.237</div>
<div class="wm" style="left:89.0px;top:498.5px">audit审计01(Audit1)</div>
<div class="wm" style="left:102.0px;top:519.5px">audit-172.18.210.237</div>
<div class="wm" style="left:89.0px;top:198.5px">audit审计01(Audit1)</div>
<div class="wm" style="left:102.0px;top:219.5px">audit-172.18.210.237</div>
<div class="wm" style="left:89.0px;top:-101.5px">audit审计01(Audit1)</div>
<div class="wm" style="left:102.0px;top:-80.5px">audit-172.18.210.237</div>
<div class="wm" style="left:389.0px;top:798.5px">audit审计01(Audit1)</div>
<div class="wm" style="left:402.0px;top:819.5px">audit-172.18.210.237</div>
<div class="wm" style="left:389.0px;top:498.5px">audit审计01(Audit1)</div>
<div class="wm" style="left:402.0px;top:519.5px">audit-172.18.210.237</div>
<div class="wm" style="left:389.0px;top:198.5px">audit审计01(Audit1)</div>
<div class="wm" style="left:402.0px;top:219.5px">audit-172.18.210.237</div>
<div class="wm" style="left:389.0px;top:-101.5px">audit审计01(Audit1)</div>
<div class="wm" style="left:402.0px;top:-80.5px">audit-172.18.210.237</div>
<div class="wm" style="left:689.0px;top:798.5px">audit审计01(Audit1)</div>
<div class="wm" style="left:702.0px;top:819.5px">audit-172.18.210.237</div>
<div class="wm" style="left:689.0px;top:498.5px">audit审计01(Audit1)</div>
<div class="wm" style="left:702.0px;top:519.5px">audit-172.18.210.237</div>
<div class="wm" style="left:689.0px;top:198.5px">audit审计01(Audit1)</div>
<div class="wm" style="left:702.0px;top:219.5px">audit-172.18.210.237</div>
<div class="wm" style="left:689.0px;top:-101.5px">audit审计01(Audit1)</div>
<div class="wm" style="left:702.0px;top:-80.5px">audit-172.18.210.237</div>
<div class="wm" style="left:989.0px;top:798.5px">audit审计01(Audit1)</div>
<div class="wm" style="left:1002.0px;top:819.5px">audit-172.18.210.237</div>
<div class="wm" style="left:989.0px;top:498.5px">audit审计01(Audit1)</div>
<div class="wm" style="left:1002.0px;top:519.5px">audit-172.18.210.237</div>
<div class="wm" style="left:989.0px;top:198.5px">audit审计01(Audit1)</div>
<div class="wm" style="left:1002.0px;top:219.5px">audit-172.18.210.237</div>
<div class="wm" style="left:989.0px;top:-101.5px">audit审计01(Audit1)</div>
<div class="wm" style="left:1002.0px;top:-80.5px">audit-172.18.210.237</div>
<div class="wm" style="left:1289.0px;top:798.5px">audit审计01(Audit1)</div>
<div class="wm" style="left:1302.0px;top:819.5px">audit-172.18.210.237</div>
<div class="wm" style="left:1289.0px;top:498.5px">audit审计01(Audit1)</div>
<div class="wm" style="left:1302.0px;top:519.5px">audit-172.18.210.237</div>
<div class="wm" style="left:1289.0px;top:198.5px">audit审计01(Audit1)</div>
<div class="wm" style="left:1302.0px;top:219.5px">audit-172.18.210.237</div>
<div class="wm" style="left:1289.0px;top:-101.5px">audit审计01(Audit1)</div>
<div class="wm" style="left:1302.0px;top:-80.5px">audit-172.18.210.237</div>
<div class="wm" style="left:1589.0px;top:798.5px">audit审计01(Audit1)</div>
<div class="wm" style="left:1602.0px;top:819.5px">audit-172.18.210.237</div>
<div class="wm" style="left:1589.0px;top:498.5px">audit审计01(Audit1)</div>
<div class="wm" style="left:1602.0px;top:519.5px">audit-172.18.210.237</div>
<div class="wm" style="left:1589.0px;top:198.5px">audit审计01(Audit1)</div>
<div class="wm" style="left:1602.0px;top:219.5px">audit-172.18.210.237</div>
<div class="wm" style="left:1589.0px;top:-101.5px">audit审计01(Audit1)</div>
<div class="wm" style="left:1602.0px;top:-80.5px">audit-172.18.210.237</div>
</div>
</body></html>
